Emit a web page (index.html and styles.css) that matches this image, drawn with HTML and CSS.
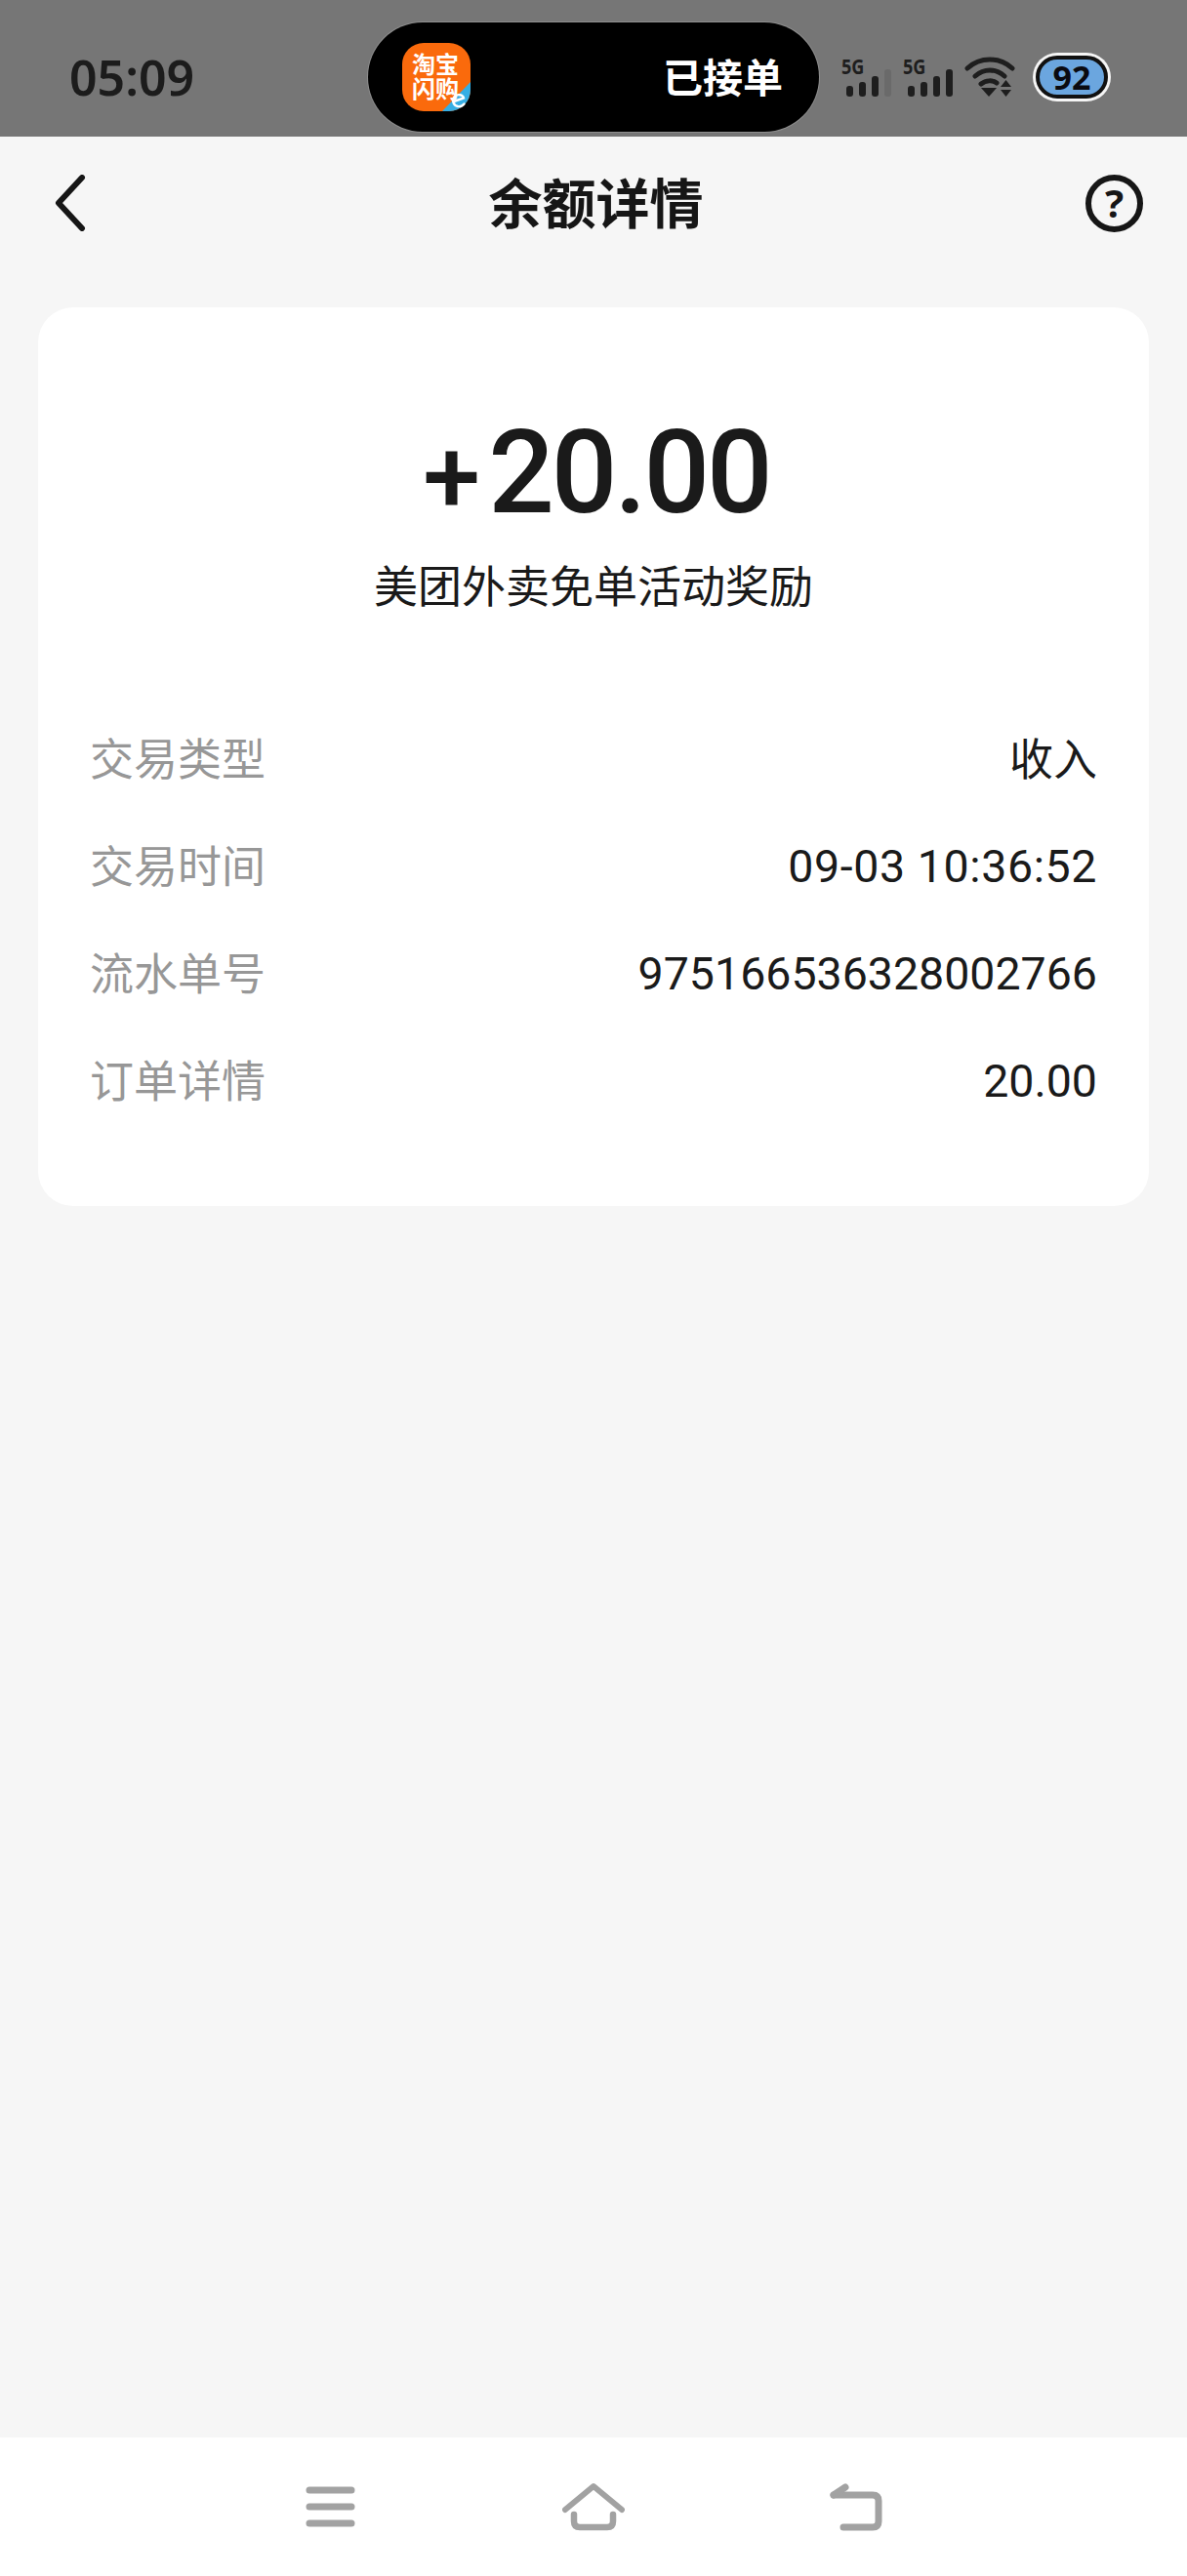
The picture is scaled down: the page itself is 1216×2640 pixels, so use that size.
FILE: index.html
```html
<!DOCTYPE html>
<html lang="zh-CN">
<head>
<meta charset="utf-8">
<title>余额详情</title>
<link rel="stylesheet" href="styles.css">
</head>
<body>
<div class="screen">
  <header class="status">
    <span class="time">05:09</span>
    <div class="island">
      <div class="appicon">
        <svg class="appicon-bg" viewBox="0 0 70 70" width="70" height="70"><defs><clipPath id="sq"><rect width="70" height="70" rx="22"/></clipPath></defs><g clip-path="url(#sq)"><rect width="70" height="70" fill="#fa6a0c"/><path d="M70 40V70H41Z" fill="#35aee4"/></g></svg>
        <span class="appicon-text">淘宝<br>闪购</span>
        <svg class="appicon-badge" viewBox="0 0 16 16" width="16" height="16"><path d="M3 9L13 5.500C12 2 7 1 4 3.500C0.500 7 2 13 7 14C10 14.500 12 13.500 13.500 11.500" fill="none" stroke="#fff" stroke-width="2.400" stroke-linecap="round"/></svg>
      </div>
      <span class="island-text">已接单</span>
    </div>
    <div class="indicators">
      <div class="sig">
        <span class="sig-label">5G</span>
        <svg viewBox="0 0 46 28" width="46" height="28"><g fill="#1e1e1e"><rect x="0" y="17" width="7" height="11" rx="3"/><rect x="13" y="13" width="7" height="15" rx="3"/><rect x="26" y="7" width="7" height="21" rx="3"/></g><rect x="39" y="0" width="7" height="28" rx="3" fill="#6a6a6a"/></svg>
      </div>
      <div class="sig">
        <span class="sig-label">5G</span>
        <svg viewBox="0 0 46 28" width="46" height="28"><g fill="#1e1e1e"><rect x="0" y="17" width="7" height="11" rx="3"/><rect x="13" y="13" width="7" height="15" rx="3"/><rect x="26" y="7" width="7" height="21" rx="3"/><rect x="39" y="0" width="7" height="28" rx="3"/></g></svg>
      </div>
      <svg class="wifi" viewBox="0 0 52 42" width="52" height="42"><g fill="none" stroke="#1e1e1e" stroke-width="5" stroke-linecap="round"><path d="M3 12C16 0 36 0 49 12"/><path d="M11 20C20 12 32 12 41 20"/><path d="M17 28C22 24 29 24 33 27"/></g><path d="M17 32H33L25 41Z" fill="#1e1e1e"/><path d="M37 31L42.500 24L48 31ZM37 34H48L42.500 41Z" fill="#1e1e1e"/></svg>
      <div class="battery"><span class="battery-num">92</span></div>
    </div>
  </header>

  <nav class="topbar">
    <svg class="back" viewBox="0 0 32 58" width="32" height="58"><path d="M28 3L4 29L28 55" fill="none" stroke="#161616" stroke-width="6" stroke-linecap="round" stroke-linejoin="round"/></svg>
    <h1 class="title">余额详情</h1>
    <div class="help">?</div>
  </nav>

  <main class="content">
    <section class="card">
      <div class="amount"><span class="plus">+</span>20.00</div>
      <div class="desc">美团外卖免单活动奖励</div>
      <dl class="rows">
        <div class="row"><dt>交易类型</dt><dd class="cn">收入</dd></div>
        <div class="row"><dt>交易时间</dt><dd class="stamp">09-03 10:36:52</dd></div>
        <div class="row"><dt>流水单号</dt><dd>975166536328002766</dd></div>
        <div class="row"><dt>订单详情</dt><dd>20.00</dd></div>
      </dl>
    </section>
  </main>

  <footer class="navbar">
    <svg viewBox="0 0 51 42" width="51" height="42"><g stroke="#a2a2a2" stroke-width="7" stroke-linecap="round"><path d="M4 4H47"/><path d="M4 21H47"/><path d="M4 38H47"/></g></svg>
    <svg viewBox="0 0 64 50" width="64" height="50"><g fill="none" stroke="#a2a2a2" stroke-linecap="round" stroke-linejoin="round"><path d="M3 28L32 4L61 28" stroke-width="6"/><path d="M12 33V40Q12 46 18 46H46Q52 46 52 40V33" stroke-width="6.500"/></g></svg>
    <svg viewBox="0 0 54 50" width="54" height="50"><g fill="none" stroke="#a2a2a2" stroke-linecap="round" stroke-linejoin="round"><path d="M4 13H44Q50 13 50 19V40Q50 46 44 46H14" stroke-width="7"/><path d="M4 13L16 5" stroke-width="7"/></g></svg>
  </footer>
</div>
</body>
</html>
```
FILE: styles.css
```css
* { box-sizing: border-box; }
html, body { margin: 0; padding: 0; }
body {
  width: 1216px;
  height: 2640px;
  overflow: hidden;
  font-family: "Noto Sans", "Noto Sans CJK SC", sans-serif;
  color: #1a1a1a;
  background: #f6f6f6;
}
.screen { display: flex; flex-direction: column; height: 2640px; }

.status {
  height: 140px;
  flex: none;
  background: #767676;
  display: flex;
  align-items: center;
  padding: 18px 0 0 71px;
}
.time {
  width: 306px;
  flex: none;
  font-family: "Noto Sans", sans-serif;
  font-size: 50px;
  font-weight: 560;
  color: #1c1c1c;
}
.island {
  width: 462px;
  height: 112px;
  flex: none;
  background: #000;
  border-radius: 56px;
  box-shadow: 0 0 0 1px #8e8e8e;
  display: flex;
  align-items: center;
  justify-content: space-between;
  padding: 0 37px 0 35px;
}
.appicon { position: relative; width: 70px; height: 70px; flex: none; }
.appicon-bg { display: block; }
.appicon-text {
  position: absolute;
  left: 10px;
  top: 8px;
  font-family: "Noto Sans CJK SC", sans-serif;
  font-size: 24px;
  font-weight: 700;
  line-height: 25px;
  color: #fff;
}
.appicon-badge { position: absolute; left: 50px; top: 51px; display: block; }
.island-text {
  font-family: "Noto Sans CJK SC", sans-serif;
  font-size: 41px;
  font-weight: 700;
  color: #fff;
  line-height: 1;
  margin-top: -3px;
}
.indicators { display: flex; align-items: center; margin-left: 23px; }
.sig { width: 51px; height: 40px; position: relative; flex: none; margin-right: 12px; display: flex; align-items: flex-end; justify-content: flex-end; }
.sig svg { display: block; }
.sig-label {
  position: absolute;
  left: 0;
  top: -4px;
  font-family: "Noto Sans", sans-serif;
  font-size: 22px;
  font-weight: 700;
  color: #1e1e1e;
  transform: scaleX(.82);
  transform-origin: left;
  line-height: 24px;
}
.wifi { display: block; flex: none; }
.battery {
  width: 74px;
  height: 44px;
  flex: none;
  margin-left: 21px;
  border-radius: 22px;
  background: #6ba6df;
  border: 4px solid #111;
  box-shadow: 0 0 0 3px #f5f5f5;
  display: flex;
  align-items: center;
  justify-content: center;
}
.battery-num { font-family: "Noto Sans", sans-serif; font-size: 34px; font-weight: 700; color: #0a0a10; line-height: 1; }

.topbar {
  height: 175px;
  flex: none;
  display: grid;
  grid-template-columns: 1fr auto 1fr;
  align-items: center;
  padding: 0 45px 38px 50px;
}
.back { display: block; margin: -2px 0 0 6px; }
.title {
  margin: 0 0 6px;
  font-family: "Noto Sans CJK SC", sans-serif;
  font-size: 55px;
  font-weight: 700;
  color: #161616;
  line-height: 1;
}
.help {
  width: 59px;
  height: 59px;
  justify-self: end;
  border: 6px solid #161616;
  border-radius: 50%;
  font-family: "Noto Sans", sans-serif;
  font-size: 40px;
  font-weight: 700;
  color: #161616;
  line-height: 46px;
  text-align: center;
}

.content { flex: 1; padding: 0 39px; }
.card {
  background: #fff;
  border-radius: 36px;
  height: 921px;
  padding: 110px 53px 0;
}
.amount {
  font-family: "Roboto", sans-serif;
  font-size: 119px;
  font-weight: 500;
  line-height: 1;
  text-align: center;
  color: #1a1a1a;
  letter-spacing: -3px;
  padding-left: 6px;
}
.plus { font-size: 106px; margin-right: 11px; }
.desc {
  margin-top: 25px;
  font-family: "Noto Sans CJK SC", sans-serif;
  font-size: 45px;
  line-height: 60px;
  text-align: center;
  color: #1a1a1a;
}
.rows { margin: 91px 0 0; }
.row { display: flex; justify-content: space-between; align-items: center; height: 110px; }
.row dt { font-family: "Noto Sans CJK SC", sans-serif; font-size: 45px; color: #979797; }
.row dd { margin: 0; padding-top: 6px; font-family: "Roboto", sans-serif; font-size: 46.500px; color: #1a1a1a; }
.row dd.cn { padding-top: 0; font-family: "Noto Sans CJK SC", sans-serif; font-size: 45px; }
.row dd.stamp { letter-spacing: .6px; }

.navbar {
  height: 142px;
  flex: none;
  background: #fff;
  display: flex;
  align-items: center;
  padding: 0 0 0 313px;
}
.navbar svg { display: block; flex: none; margin-top: -1px; }
.navbar svg:nth-child(2) { margin-left: 212px; }
.navbar svg:nth-child(3) { margin-left: 210px; }
```
